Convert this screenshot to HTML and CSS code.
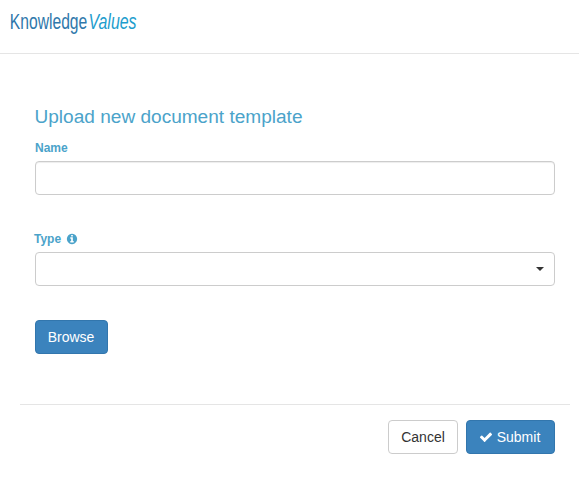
FILE: index.html
```html
<!DOCTYPE html>
<html lang="en">
<head>
<meta charset="utf-8">
<title>Upload new document template</title>
<link rel="stylesheet" href="styles.css">
</head>
<body>
<header class="header">
  <svg class="logo" width="160" height="40" viewBox="0 0 160 40">
    <text class="logo-main" x="9.8" y="29" textLength="77.5" lengthAdjust="spacingAndGlyphs">Knowledge</text>
    <text class="logo-accent" x="88.5" y="29" textLength="48" lengthAdjust="spacingAndGlyphs">Values</text>
  </svg>
</header>
<main class="page">
  <form class="form">
    <h1 class="title"><svg class="title-text" width="270" height="26"><text x="-0.5" y="19" textLength="268" lengthAdjust="spacingAndGlyphs">Upload new document template</text></svg></h1>
    <div class="group">
      <label class="label" for="name">Name</label>
      <input class="control" id="name" type="text">
    </div>
    <div class="group">
      <div class="label type-label">Type
        <svg class="info" width="12" height="12" viewBox="0 0 1792 1792"><path fill="currentColor" d="M1152 1376v-160q0-14-9-23t-23-9h-96v-512q0-14-9-23t-23-9h-320q-14 0-23 9t-9 23v160q0 14 9 23t23 9h96v320h-96q-14 0-23 9t-9 23v160q0 14 9 23t23 9h448q14 0 23-9t9-23zm-128-896v-160q0-14-9-23t-23-9h-192q-14 0-23 9t-9 23v160q0 14 9 23t23 9h192q14 0 23-9t9-23zm640 416q0 209-103 385.5t-279.5 279.5-385.5 103-385.5-103-279.5-279.5-103-385.5 103-385.5 279.5-279.5 385.5-103 385.5 103 279.5 279.5 103 385.5z"/></svg>
      </div>
      <div class="control select"><span class="caret"></span></div>
    </div>
    <button class="btn primary browse" type="button">Browse</button>
  </form>
  <footer class="footer">
    <button class="btn cancel" type="button">Cancel</button>
    <button class="btn primary submit" type="button"><svg class="check" width="14" height="14" viewBox="0 0 1792 1792"><path fill="currentColor" d="M1671 566q0 40-28 68l-724 724-136 136q-28 28-68 28t-68-28l-136-136-362-362q-28-28-28-68t28-68l136-136q28-28 68-28t68 28l294 295 656-657q28-28 68-28t68 28l136 136q28 28 28 68z"/></svg>Submit</button>
  </footer>
</main>
</body>
</html>
```
FILE: styles.css
```css
* {
  box-sizing: border-box;
}

body {
  margin: 0;
  background: #fff;
  color: #333;
  font: 14px/20px "Liberation Sans", Arial, sans-serif;
}

.header {
  height: 54px;
  border-bottom: 1px solid #e5e5e5;
}

.logo {
  display: block;
}

.logo-main,
.logo-accent {
  font-family: "Liberation Sans", Arial, sans-serif;
  font-size: 22px;
}

.logo-main {
  fill: #2f78ab;
}

.logo-accent {
  font-style: italic;
  fill: #1d9dcd;
}

.page {
  padding: 50px 9px 0 20px;
}

.form {
  display: flex;
  flex-direction: column;
  align-items: flex-start;
  height: 300px;
  padding: 0 15px;
}

.title {
  height: 26px;
  margin: 0 0 8px;
  font-size: 18px;
  font-weight: 400;
  line-height: 26px;
}

.title-text {
  display: block;
  overflow: visible;
  fill: #4ba3ca;
}

.group {
  width: 520px;
  margin-bottom: 34px;
}

.label {
  display: flex;
  align-items: center;
  gap: 6px;
  height: 20px;
  margin-bottom: 3px;
  color: #4ba3ca;
  font-size: 12px;
  font-weight: 700;
  line-height: 20px;
}

.type-label {
  gap: 5px;
  margin-left: -1px;
}

.control {
  display: block;
  width: 100%;
  height: 34px;
  padding: 6px 12px;
  border: 1px solid #ccc;
  border-radius: 4px;
  background: #fff;
  box-shadow: inset 0 1px 1px rgba(0, 0, 0, 0.075);
}

.select {
  display: flex;
  align-items: center;
  justify-content: flex-end;
  padding-right: 10px;
  box-shadow: none;
}

.caret {
  border-top: 4px solid #333;
  border-right: 4px solid transparent;
  border-left: 4px solid transparent;
}

.btn {
  display: flex;
  align-items: center;
  justify-content: center;
  height: 34px;
  padding: 0;
  border: 1px solid #ccc;
  border-radius: 4px;
  background: #fff;
  color: #333;
  font: inherit;
}

.primary {
  border-color: #3276ad;
  background: #3b83bd;
  color: #fff;
}

.browse {
  width: 73px;
  padding-right: 1px;
}

.footer {
  display: flex;
  justify-content: flex-end;
  gap: 8px;
  padding: 15px 15px 0;
  border-top: 1px solid #e5e5e5;
}

.cancel {
  width: 70px;
}

.submit {
  gap: 4px;
  width: 89px;
  padding-right: 2px;
}
```
